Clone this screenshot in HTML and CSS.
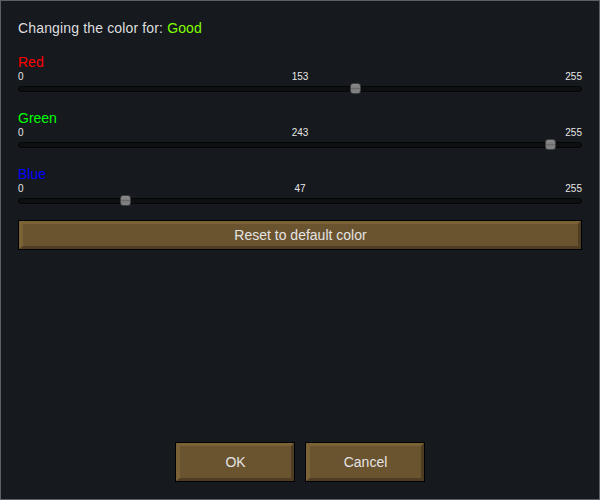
FILE: index.html
```html
<!DOCTYPE html>
<html>
<head>
<meta charset="utf-8">
<link rel="stylesheet" href="styles.css">
</head>
<body>
<div class="panel">
  <div class="title">Changing the color for: <span class="good">Good</span></div>

  <div class="sliders">
    <div class="slider">
      <div class="label red">Red</div>
      <div class="scale"><span class="min">0</span><span class="cur">153</span><span class="max">255</span></div>
      <div class="track-wrap">
        <div class="track"></div>
        <div class="thumb" style="--p:0.6"></div>
      </div>
    </div>
    <div class="slider">
      <div class="label green">Green</div>
      <div class="scale"><span class="min">0</span><span class="cur">243</span><span class="max">255</span></div>
      <div class="track-wrap">
        <div class="track"></div>
        <div class="thumb" style="--p:0.9529"></div>
      </div>
    </div>
    <div class="slider">
      <div class="label blue">Blue</div>
      <div class="scale"><span class="min">0</span><span class="cur">47</span><span class="max">255</span></div>
      <div class="track-wrap">
        <div class="track"></div>
        <div class="thumb" style="--p:0.1843"></div>
      </div>
    </div>
  </div>

  <button class="btn reset"><span class="face">Reset to default color</span></button>

  <div class="footer">
    <button class="btn action"><span class="face">OK</span></button>
    <button class="btn action"><span class="face">Cancel</span></button>
  </div>
</div>
</body>
</html>
```

FILE: styles.css
```css
html, body {
  margin: 0;
  padding: 0;
  background: #16191e;
}

.panel {
  width: 600px;
  height: 500px;
  box-sizing: border-box;
  border: 1px solid #5c6169;
  background: #16191e;
  padding: 17px;
  display: flex;
  flex-direction: column;
  font-family: "Liberation Sans", Arial, sans-serif;
  color: #dcdcdc;
}

.title {
  font-size: 14px;
  line-height: 20px;
  height: 20px;
  color: #dedede;
  letter-spacing: 0.15px;
}

.good { color: #80ff00; }

.sliders {
  margin-top: 16px;
  display: flex;
  flex-direction: column;
  gap: 15px;
}

.label {
  font-size: 14px;
  line-height: 17px;
  height: 17px;
}
.red { color: #ff0000; }
.green { color: #00ff00; }
.blue { color: #0000ff; }

.scale {
  display: grid;
  grid-template-columns: 1fr auto 1fr;
  font-size: 10px;
  line-height: 12px;
  height: 12px;
  color: #e6e6e6;
}
.scale .min { text-align: left; }
.scale .cur { text-align: center; }
.scale .max { text-align: right; }

.track-wrap {
  position: relative;
  height: 12px;
}

.track {
  position: relative;
  top: 3px;
  height: 6px;
  box-sizing: border-box;
  background: #0d0f11;
  border: 1px solid #050607;
  border-radius: 4px;
}

.thumb {
  position: absolute;
  top: 0;
  left: calc((100% - 11px) * var(--p));
  width: 11px;
  height: 11px;
  box-sizing: border-box;
  border: 1px solid #3e3f41;
  border-radius: 3px;
  background: linear-gradient(#8c8c8c 0%, #7e7e7e 40%, #6a6a6a 50%, #7a7a7a 60%, #858585 100%);
}

.btn {
  display: block;
  padding: 0;
  margin: 0;
  border: 1px solid #000;
  background: #6a532f;
  font-family: "Liberation Sans", Arial, sans-serif;
  font-size: 14px;
  color: #e4e4e4;
  cursor: pointer;
}

.face {
  display: flex;
  align-items: center;
  justify-content: center;
  box-sizing: border-box;
  height: 100%;
  border-style: solid;
  border-width: 3px 3px 3px 4px;
  border-color: #7a6136 #4e3d22 #4e3d22 #7a6136;
}

.reset {
  margin-top: 13px;
  height: 30px;
  width: 100%;
}

.footer {
  margin-top: auto;
  display: flex;
  justify-content: center;
  gap: 10px;
}

.action {
  width: 120px;
  height: 40px;
}
```
